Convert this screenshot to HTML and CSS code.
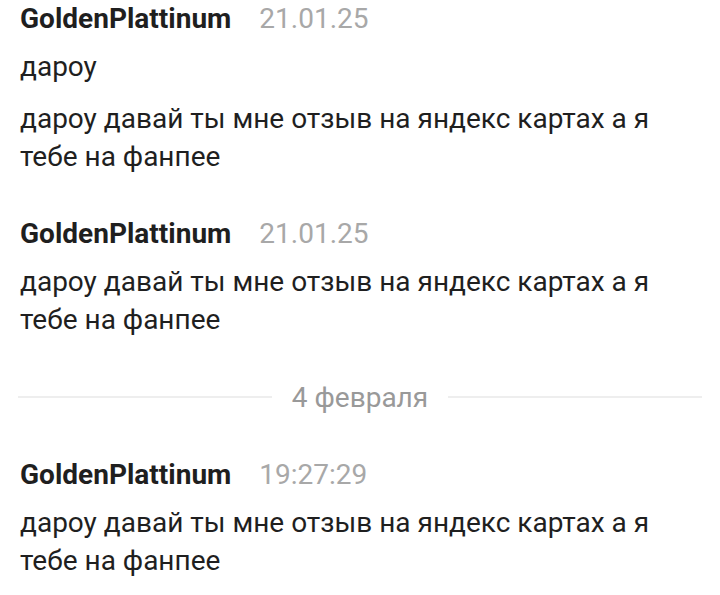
FILE: index.html
```html
<!DOCTYPE html>
<html lang="ru">
<head>
    <meta charset="UTF-8">
    <meta name="viewport" content="width=device-width, initial-scale=1.0">
    <title>Чат</title>
    <link rel="stylesheet" href="styles.css">
</head>
<body>

    <div class="chat">
        <div class="group">
            <div class="head">
                <span class="author">GoldenPlattinum</span>
                <span class="time">21.01.25</span>
            </div>
            <p class="text first">дароу</p>
            <p class="text">дароу давай ты мне отзыв на яндекс картах а я тебе на фанпее</p>
        </div>

        <div class="group">
            <div class="head">
                <span class="author">GoldenPlattinum</span>
                <span class="time">21.01.25</span>
            </div>
            <p class="text first">дароу давай ты мне отзыв на яндекс картах а я тебе на фанпее</p>
        </div>

        <div class="divider">
            <span>4 февраля</span>
        </div>

        <div class="group">
            <div class="head">
                <span class="author">GoldenPlattinum</span>
                <span class="time">19:27:29</span>
            </div>
            <p class="text first">дароу давай ты мне отзыв на яндекс картах а я тебе на фанпее</p>
        </div>
    </div>

</body>
</html>
```

FILE: styles.css
```css
body {
    font-family: Roboto, "Noto Sans", Arial, sans-serif;
    margin: 0;
    padding: 0;
    background: #fff;
    color: #1f1f1f;
}

.chat {
    width: 720px;
}

.group {
    padding: 0 20px;
    margin-bottom: 39px;
}

.head {
    display: flex;
    align-items: baseline;
    gap: 28px;
    line-height: 38px;
}

.author {
    font-size: 28px;
    font-weight: 700;
    color: #1f1f1f;
}

.time {
    font-size: 28px;
    color: #a8a8a8;
}

.text {
    margin: 14px 0 0;
    font-size: 28px;
    line-height: 38px;
    max-width: 660px;
}

.text.first {
    margin-top: 10px;
}

.divider {
    display: flex;
    align-items: center;
    gap: 20px;
    margin: 0 18px 40px;
    height: 38px;
    font-size: 28px;
    color: #999;
}

.divider::before,
.divider::after {
    content: "";
    flex: 1;
    height: 2px;
    background: #eee;
}
```
